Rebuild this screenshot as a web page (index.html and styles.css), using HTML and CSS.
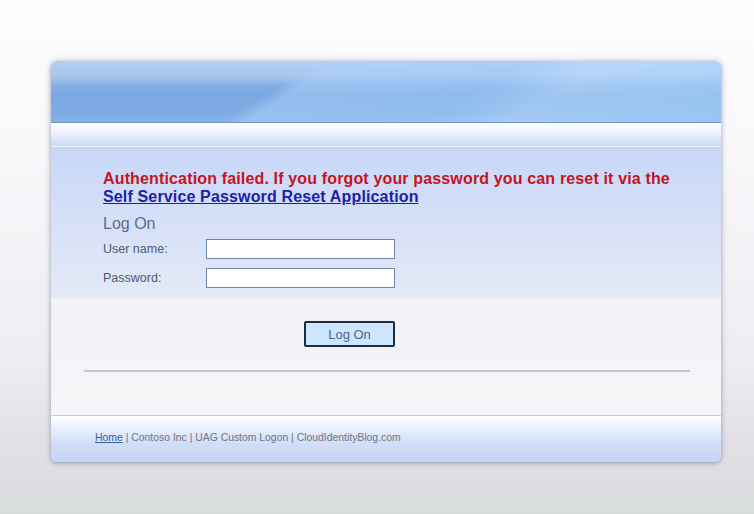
FILE: index.html
```html
<!DOCTYPE html>
<html>

<head>
    <title>Log On</title>
    <link rel="stylesheet" href="styles.css">
</head>

<body>
    <div class="panel">
        <div class="panel-header"></div>
        <div class="panel-strip"></div>

        <div class="form-area">
            <p class="error">
                Authentication failed. If you forgot your password you can reset it via the<br>
                <a href="#" class="reset-link">Self Service Password Reset Application</a>
            </p>
            <h1 class="title">Log On</h1>
            <div class="form-row">
                <label for="user">User name:</label>
                <input type="text" id="user" class="field" autofocus>
            </div>
            <div class="form-row">
                <label for="pass">Password:</label>
                <input type="password" id="pass" class="field">
            </div>
        </div>

        <div class="submit-area">
            <button class="logon-button">Log On</button>
            <hr class="divider">
        </div>

        <div class="panel-footer">
            <a href="#">Home</a> | Contoso Inc | UAG Custom Logon | CloudIdentityBlog.com
        </div>
    </div>
</body>

</html>
```

FILE: styles.css
```css
body {
    margin: 0;
    min-height: 514px;
    font-family: "Liberation Sans", Arial, sans-serif;
    background: linear-gradient(to bottom, #fdfcfe 0%, #f9f8fb 25%, #eeedf1 70%, #e2e0e6 86%, #d8dcdc 100%);
    overflow: hidden;
}

.panel {
    width: 670px;
    margin: 61px 0 0 51px;
    border-radius: 6px;
    overflow: hidden;
    box-shadow: 0 1px 4px rgba(90, 100, 120, 0.55), 0 0 10px rgba(180, 185, 200, 0.35);
    background: #f6f4f8;
}

/* blue glossy band, with a diagonal sheen on the right */
.panel-header {
    height: 61px;
    background:
        linear-gradient(148deg, rgba(255, 255, 255, 0) 35%, rgba(175, 210, 250, 0.5) 38%, rgba(165, 205, 250, 0.5) 62%, rgba(190, 222, 255, 0.55) 72%, rgba(170, 212, 252, 0.6) 100%),
        linear-gradient(to bottom, #b4d0f3 0%, #a6c6ef 25%, #86b0e5 40%, #7aa8e0 55%, #7eabe2 85%, #85b2e6 100%);
    border-bottom: 1px solid #7095c6;
}

.panel-strip {
    height: 23px;
    background: linear-gradient(to bottom, #ffffff 0%, #f4f7fe 30%, #cad9f7 100%);
    border-bottom: 1px solid #eef3fd;
}

.form-area {
    height: 128px;
    padding: 23px 0 0 52px;
    background: linear-gradient(to bottom, #c8d7f8 0%, #d6e0f8 50%, #e4e9f6 100%);
}

.error {
    margin: 0;
    font-size: 16px;
    font-weight: bold;
    letter-spacing: 0.15px;
    line-height: 18px;
    color: #c4141c;
}

.reset-link {
    color: #1b22a8;
}

.title {
    margin: 8px 0 0;
    font-size: 16px;
    font-weight: normal;
    line-height: 20px;
    color: #5c6c82;
}

.form-row {
    display: flex;
    align-items: center;
    height: 29px;
}

.form-row label {
    width: 103px;
    font-size: 12.5px;
    color: #4c5c72;
}

.field {
    box-sizing: border-box;
    width: 189px;
    height: 20px;
    margin: 0;
    border: 1px solid #6d86a6;
    background: #ffffff;
    outline: none;
}

.submit-area {
    height: 118px;
    padding-top: 23px;
    box-sizing: border-box;
    background: linear-gradient(to bottom, #f1f1f7 0%, #f7f5f8 100%);
    border-bottom: 1px solid #c9ccd4;
}

.logon-button {
    display: block;
    margin-left: 253px;
    width: 91px;
    height: 26px;
    border: 2px solid #1f2c3c;
    border-radius: 2px;
    background: #cde6fd;
    font-family: "Liberation Sans", Arial, sans-serif;
    font-size: 13px;
    color: #4a6890;
    cursor: pointer;
}

.divider {
    margin: 23px 31px 0 33px;
    border: none;
    height: 2px;
    background: #c3c6ce;
}

.panel-footer {
    height: 46px;
    padding: 0 0 4px 44px;
    box-sizing: border-box;
    display: flex;
    align-items: center;
    font-size: 10.4px;
    color: #6c7486;
    background: linear-gradient(to bottom, #ffffff 0%, #eaf0fc 25%, #d2def8 60%, #c4d4f6 100%);
}

.panel-footer a {
    color: #3a5ea0;
    margin-right: 3px;
}
```
